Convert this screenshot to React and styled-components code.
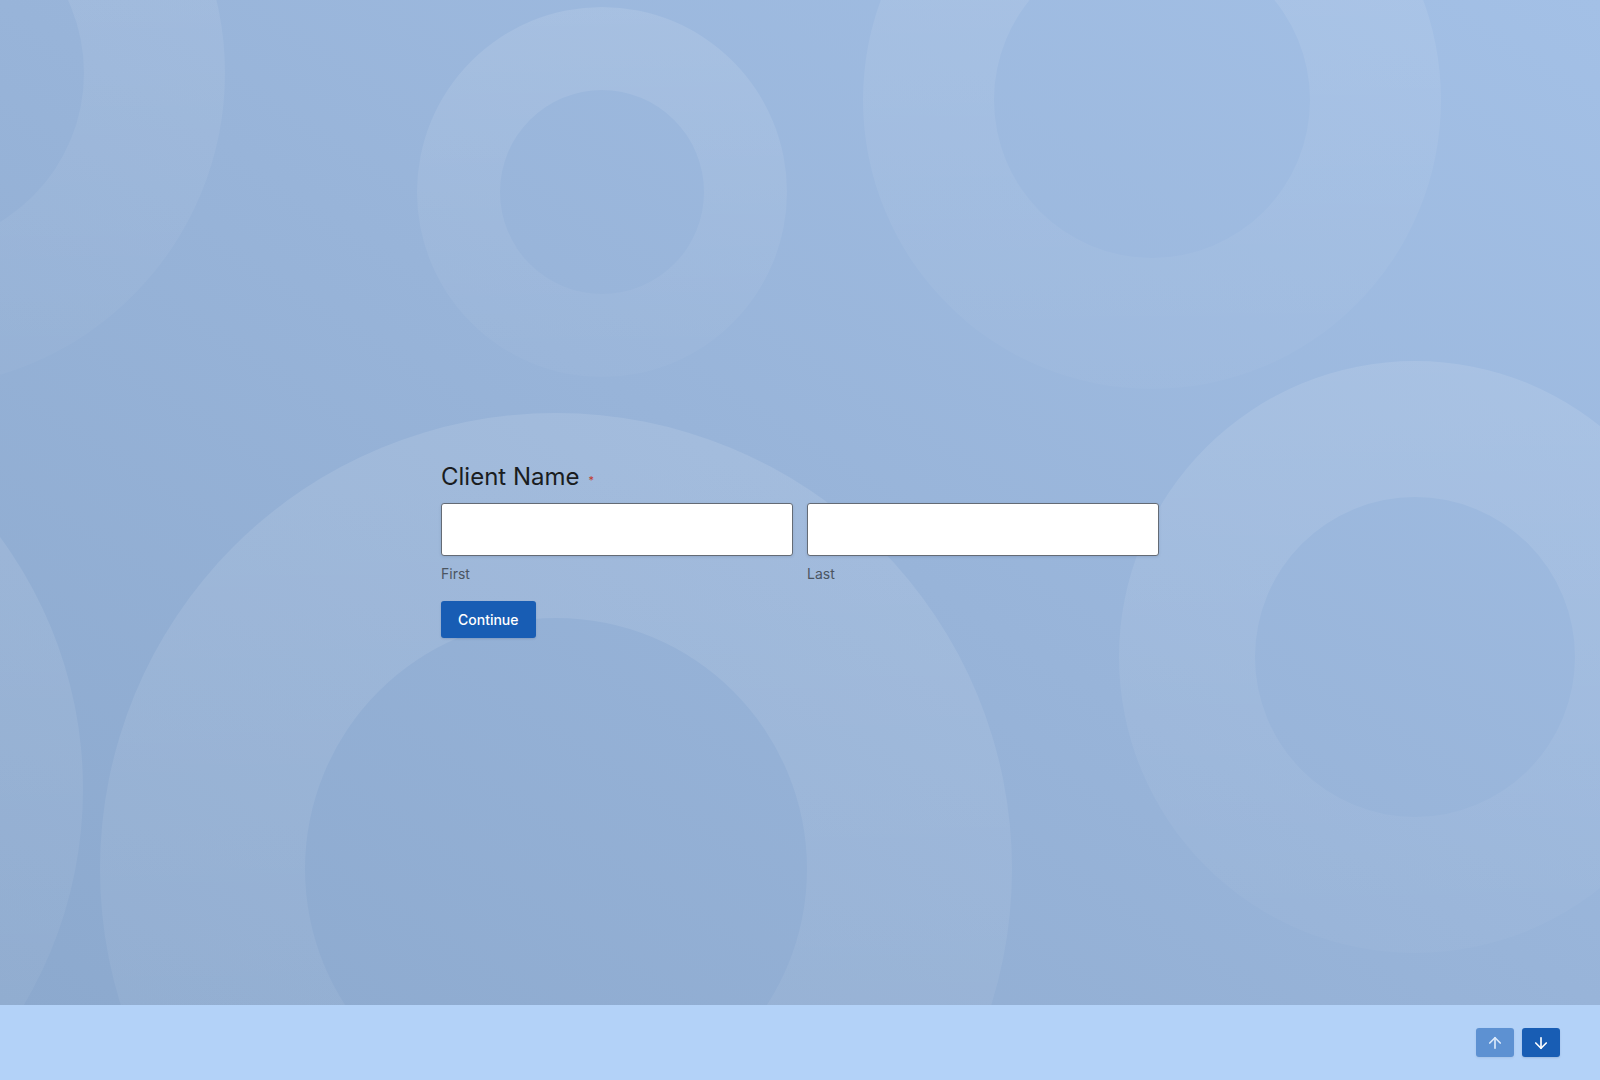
import React from 'react'
import styled,{createGlobalStyle} from 'styled-components'
import {ArrowUp,ArrowDown} from 'lucide-react'

const GlobalStyle=createGlobalStyle`
*{box-sizing:border-box;}
html,body{margin:0;padding:0;}
body{font-family:Inter,"Noto Sans",sans-serif;color:#1f2328;}
`;

// rings drawn behind the form: cx, cy, outer radius, inner radius
const rings=[
  [-90,73,315,174],
  [602,192,185,102],
  [1152,100,289,158],
  [556,869,456,251],
  [1415,657,296,160],
  [-341,789,424,250],
];

const donut=(cx,cy,R,r)=>
  `M${cx-R} ${cy}a${R} ${R} 0 1 0 ${2*R} 0a${R} ${R} 0 1 0 ${-2*R} 0Z`+
  `M${cx-r} ${cy}a${r} ${r} 0 1 0 ${2*r} 0a${r} ${r} 0 1 0 ${-2*r} 0Z`;

function Backdrop(){
  return(
    <Decor viewBox="0 0 1600 1005" preserveAspectRatio="xMinYMin slice">
      <defs>
        <linearGradient id="ringFade" x1="0" y1="0" x2="0" y2="1">
          <stop offset="0" stopColor="#ffffff" stopOpacity="0.11"/>
          <stop offset="1" stopColor="#ffffff" stopOpacity="0.025"/>
        </linearGradient>
      </defs>
      {rings.map(([cx,cy,R,r],i)=>(
        <path key={i} d={donut(cx,cy,R,r)} fill="url(#ringFade)" fillRule="evenodd"/>
      ))}
    </Decor>
  )
}

function App(){
  return(
    <Page>
      <GlobalStyle/>
      <Main>
        <Backdrop/>
        <Form onSubmit={e=>e.preventDefault()}>
          <Heading>Client Name<Required>*</Required></Heading>
          <NameRow>
            <Field>
              <TextInput type="text"/>
              <SubLabel>First</SubLabel>
            </Field>
            <Field>
              <TextInput type="text"/>
              <SubLabel>Last</SubLabel>
            </Field>
          </NameRow>
          <ContinueButton type="submit">Continue</ContinueButton>
        </Form>
      </Main>
      <Footer>
        <NavButton disabled aria-label="Previous"><ArrowUp size={18} strokeWidth={2.2}/></NavButton>
        <NavButton aria-label="Next"><ArrowDown size={18} strokeWidth={2.2}/></NavButton>
      </Footer>
    </Page>
  )
}

const Page=styled.div`
display:flex;
flex-direction:column;
width:100%;
height:100vh;
overflow:hidden;
`;
const Main=styled.main`
position:relative;
flex:1;
overflow:hidden;
background:linear-gradient(to top right,#8ca9ce 0%,#98b4d9 50%,#a3c0e6 100%);
`;
const Decor=styled.svg`
position:absolute;
inset:0;
width:100%;
height:100%;
`;
const Form=styled.form`
position:relative;
width:718px;
margin:0 auto;
padding-top:461px;
display:flex;
flex-direction:column;
align-items:flex-start;
`;
const Heading=styled.h2`
margin:0 0 7px;
font-size:24px;
line-height:32px;
font-weight:400;
color:#1a1d21;
`;
const Required=styled.span`
margin-left:9px;
font-size:11px;
vertical-align:1px;
color:#c0392b;
`;
const NameRow=styled.div`
display:grid;
grid-template-columns:1fr 1fr;
gap:14px;
width:100%;
`;
const Field=styled.div`
display:flex;
flex-direction:column;
`;
const TextInput=styled.input`
height:53px;
width:100%;
border:1px solid #646b75;
border-radius:3px;
background:#fff;
box-shadow:0 1px 3px rgba(30,50,90,0.12);
font:inherit;
padding:0 12px;
outline:none;
`;
const SubLabel=styled.label`
margin-top:8px;
font-size:14px;
line-height:20px;
color:#4b5561;
`;
const ContinueButton=styled.button`
margin-top:17px;
height:37px;
padding:0 17px;
border:none;
border-radius:3px;
background:#185db4;
color:#fff;
font-family:Inter,"Noto Sans",sans-serif;
font-size:14px;
font-weight:500;
box-shadow:0 1px 2px rgba(20,40,80,0.15);
cursor:pointer;
`;
const Footer=styled.footer`
height:75px;
flex-shrink:0;
display:flex;
justify-content:flex-end;
align-items:center;
gap:8px;
padding:0 40px 0 0;
background:#b3d2f8;
`;
const NavButton=styled.button`
width:38px;
height:29px;
display:flex;
align-items:center;
justify-content:center;
border:none;
border-radius:3px;
background:#185db4;
color:#fff;
opacity:${p=>p.disabled?0.55:1};
box-shadow:0 1px 2px rgba(20,40,80,0.15);
padding:0;
cursor:pointer;
`;

export default App
